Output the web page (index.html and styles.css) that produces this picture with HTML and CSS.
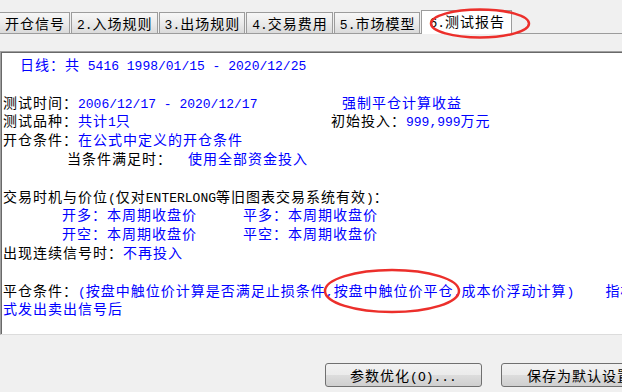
FILE: index.html
```html
<!DOCTYPE html>
<html lang="zh-CN">

<head>
    <meta charset="UTF-8">
    <title>测试报告</title>
    <link rel="stylesheet" href="styles.css">
</head>

<body>
    <div class="tabs">
        <div class="tab first">开仓信号</div>
        <div class="tab"><span class="en">2.</span>入场规则</div>
        <div class="tab"><span class="en">3.</span>出场规则</div>
        <div class="tab"><span class="en">4.</span>交易费用</div>
        <div class="tab"><span class="en">5.</span>市场模型</div>
        <div class="tab active"><span class="en">6.</span>测试报告</div>
    </div>

    <div class="panel">
        <div class="row blue day">日线：共<span class="en"> 5416 1998/01/15 - 2020/12/25</span></div>
        <div class="row"></div>
        <div class="row"><span class="cell w-time">测试时间：<span class="blue en">2006/12/17 - 2020/12/17</span></span><span class="blue">强制平仓计算收益</span></div>
        <div class="row"><span class="cell w-kind">测试品种：<span class="blue">共计<span class="en">1</span>只</span></span>初始投入：<span class="blue"><span class="en">999,999</span>万元</span></div>
        <div class="row">开仓条件：<span class="blue">在公式中定义的开仓条件</span></div>
        <div class="row"><span class="cell ind-when w-when">当条件满足时：</span><span class="blue">使用全部资金投入</span></div>
        <div class="row"></div>
        <div class="row">交易时机与价位<span class="en">(</span>仅对<span class="en">ENTERLONG</span>等旧图表交易系统有效<span class="en">)</span>：</div>
        <div class="row blue"><span class="cell ind-price w-price">开多：本周期收盘价</span>平多：本周期收盘价</div>
        <div class="row blue"><span class="cell ind-price w-price">开空：本周期收盘价</span>平空：本周期收盘价</div>
        <div class="row">出现连续信号时：<span class="blue">不再投入</span></div>
        <div class="row"></div>
        <div class="row">平仓条件：<span class="blue"><span class="en">(</span>按盘中触位价计算是否满足止损条件<span class="en">,</span>按盘中触位价平仓<span class="en">,</span>成本价浮动计算<span class="en">)    </span>指标公</span></div>
        <div class="row blue">式发出卖出信号后</div>
    </div>

    <div class="actions">
        <button class="btn">参数优化<span class="en">(O)...</span></button>
        <button class="btn">保存为默认设置</button>
    </div>

    <svg class="marks" width="622" height="392" viewBox="0 0 622 392">
        <ellipse cx="480" cy="23.5" rx="49" ry="14" />
        <ellipse cx="392" cy="291" rx="67" ry="21" />
    </svg>
</body>

</html>
```

FILE: styles.css
```css
body {
    margin: 0;
    width: 622px;
    height: 392px;
    overflow: hidden;
    position: relative;
    background-color: #f0f0f0;
    font-family: "Noto Sans CJK SC", sans-serif;
    font-size: 14px;
    letter-spacing: 1px;
    color: #000;
}

.en {
    font-family: "Liberation Mono", monospace;
    font-size: 13px;
    letter-spacing: 0;
    line-height: 1;
    white-space: pre;
}

.blue {
    color: #0000ff;
}

/* tab strip */
.tabs {
    display: flex;
    align-items: flex-end;
    gap: 1px;
    height: 34px;
    box-sizing: border-box;
    border-bottom: 1px solid #9c9c9c;
}

.tab {
    height: 21px;
    box-sizing: border-box;
    padding: 0 4px 0 5px;
    line-height: 20px;
    white-space: nowrap;
    border: 1px solid #9c9c9c;
    border-bottom: none;
    background: linear-gradient(#f7f7f7, #ebebeb 50%, #dadada);
}

.tab.first {
    margin-left: -1px;
}

.tab.active {
    height: 24px;
    margin-bottom: -1px;
    padding: 0 6px 2px 7px;
    line-height: 21px;
    background: #fff;
}

/* report text */
.panel {
    margin-top: 17px;
    width: 660px;
    height: 284px;
    box-sizing: border-box;
    padding: 3px 0 0 2px;
    background-color: #fff;
    border-top: 1px solid #a0a0a0;
    border-left: 1px solid #a0a0a0;
    border-bottom: 1px solid #dcdcdc;
    box-shadow: inset 1px 1px 0 #696969;
    overflow: hidden;
}

.row {
    height: 18.8px;
    line-height: 18.8px;
    white-space: nowrap;
}

.cell {
    display: inline-block;
}

.day {
    padding-left: 17px;
}

.w-time {
    width: 339px;
}

.w-kind {
    width: 328px;
}

.ind-when {
    margin-left: 64px;
}

.w-when {
    width: 121px;
}

.ind-price {
    margin-left: 59px;
}

.w-price {
    width: 181px;
}

/* buttons */
.actions {
    display: flex;
    gap: 19px;
    padding: 28px 0 0 325px;
}

.btn {
    flex: none;
    width: 157px;
    height: 24px;
    padding: 0;
    border: 1px solid #707070;
    border-radius: 3px;
    background: linear-gradient(#f2f2f2, #ebebeb 50%, #dddddd 50%, #cfcfcf);
    font: inherit;
    letter-spacing: inherit;
    color: #000;
    white-space: nowrap;
}

/* red annotation rings */
.marks {
    position: absolute;
    left: 0;
    top: 0;
    pointer-events: none;
}

.marks ellipse {
    fill: none;
    stroke: #ec2f2b;
    stroke-width: 2.5;
}
```
